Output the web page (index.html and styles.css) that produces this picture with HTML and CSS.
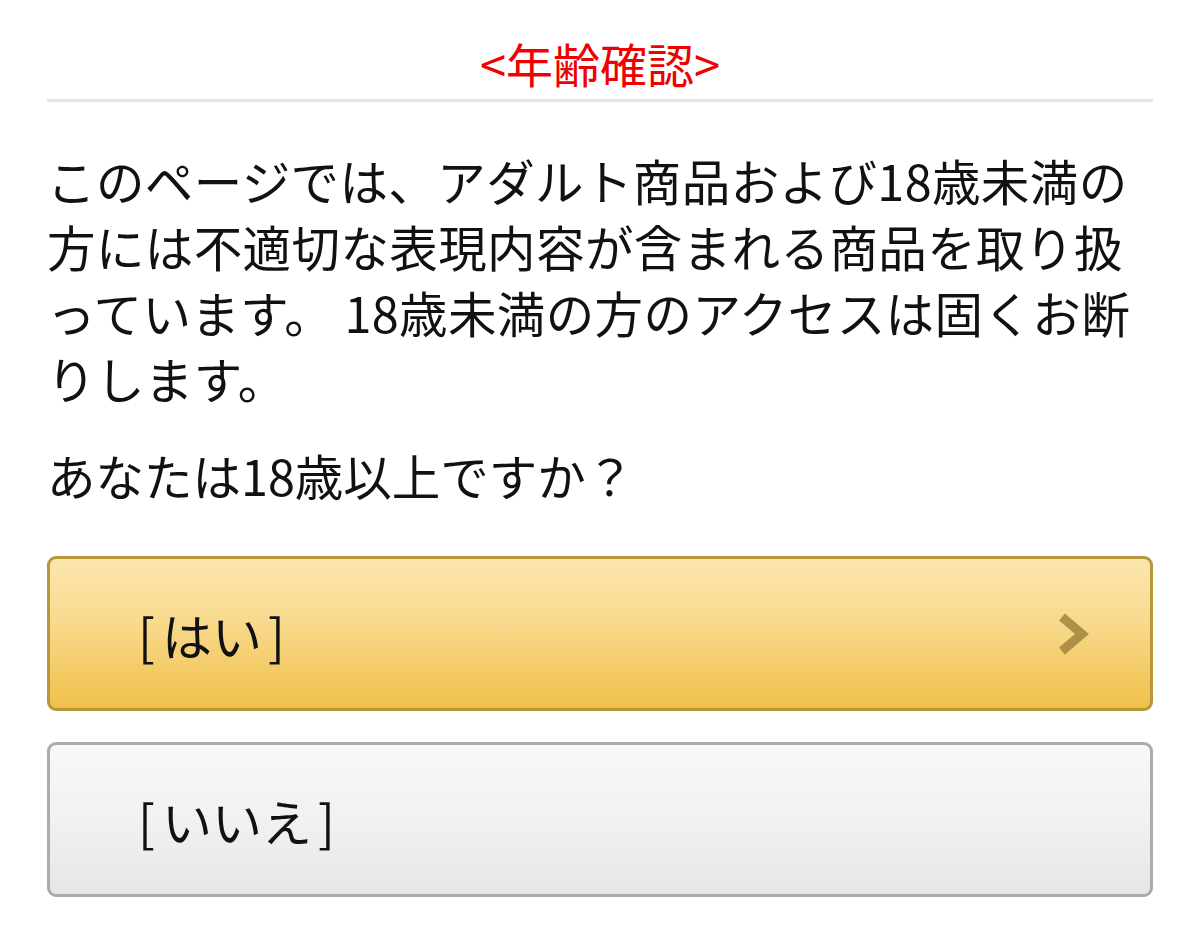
FILE: index.html
```html
<!DOCTYPE html>
<html lang="ja">
<head>
<meta charset="utf-8">
<link rel="stylesheet" href="styles.css">
</head>
<body>
<div class="page">
  <header class="head">
    <h1 class="title">&lt;年齢確認&gt;</h1>
  </header>
  <p class="notice">このページでは、アダルト商品および18歳未満の<br>方には不適切な表現内容が含まれる商品を取り扱<br>っています。 18歳未満の方のアクセスは固くお断<br>りします。</p>
  <p class="question">あなたは18歳以上ですか？</p>
  <div class="buttons">
    <a class="btn btn-yes" href="#">
      <span class="label"><span class="br-l">[</span>はい<span class="br-r">]</span></span>
      <svg class="chev" width="34" height="48" viewBox="0 0 34 48"><path d="M6 7 L26 24 L6 41" fill="none" stroke="#9c7f3a" stroke-width="9" stroke-linejoin="miter"/></svg>
    </a>
    <a class="btn btn-no" href="#">
      <span class="label"><span class="br-l">[</span>いいえ<span class="br-r">]</span></span>
    </a>
  </div>
</div>
</body>
</html>
```
FILE: styles.css
```css
* { box-sizing: border-box; }
html, body { margin: 0; padding: 0; background: #fff; }
body {
  font-family: "Noto Sans CJK JP", "Noto Sans", sans-serif;
  color: #111;
}
.page {
  padding: 0 47px;
}
.head {
  padding-top: 35px;
  padding-bottom: 8px;
  border-bottom: 3px solid #e4e4e4;
}
.title {
  margin: 0;
  font-size: 47px;
  line-height: 56px;
  font-weight: 400;
  color: #f00000;
  text-align: center;
}
.notice {
  margin: 45px 0 0;
  font-size: 48.5px;
  line-height: 66px;
  white-space: nowrap;
  letter-spacing: 0.4px;
}
.question {
  margin: 31px 0 0;
  font-size: 48.5px;
  line-height: 66px;
}
.buttons {
  margin-top: 48px;
  display: flex;
  flex-direction: column;
  gap: 31px;
}
.btn {
  display: flex;
  align-items: center;
  justify-content: space-between;
  height: 155px;
  padding: 0 60px 0 88px;
  border-radius: 9px;
  text-decoration: none;
  color: #111;
}
.btn .label {
  font-size: 50px;
  line-height: 1;
  font-weight: 400;
}
.br-l { margin-right: 7px; }
.br-r { margin-left: 6px; }
.btn-yes {
  border: 3px solid #b8973b;
  background: linear-gradient(to bottom, #fce6ae 0%, #f8d98a 45%, #efbf48 100%);
}
.btn-no {
  border: 3px solid #acacac;
  background: linear-gradient(to bottom, #f8f8f8 0%, #f1f1f1 50%, #e6e6e6 100%);
}
.chev { opacity: 0.8; }
```
